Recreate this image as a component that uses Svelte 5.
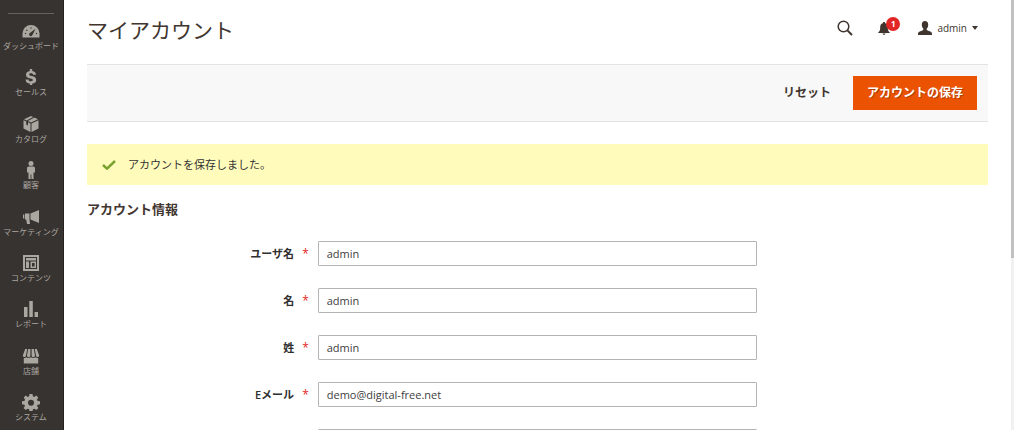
<script lang="ts">
  interface Field {
    id: string;
    label: string;
    value: string;
    type: string;
  }

  const menu = [
    { icon: 'dashboard', label: 'ダッシュボード' },
    { icon: 'sales', label: 'セールス' },
    { icon: 'catalog', label: 'カタログ' },
    { icon: 'customers', label: '顧客' },
    { icon: 'marketing', label: 'マーケティング' },
    { icon: 'content', label: 'コンテンツ' },
    { icon: 'reports', label: 'レポート' },
    { icon: 'stores', label: '店舗' },
    { icon: 'system', label: 'システム' }
  ];

  const initial: Field[] = [
    { id: 'username', label: 'ユーザ名', value: 'admin', type: 'text' },
    { id: 'firstname', label: '名', value: 'admin', type: 'text' },
    { id: 'lastname', label: '姓', value: 'admin', type: 'text' },
    { id: 'email', label: 'Eメール', value: 'demo@digital-free.net', type: 'email' },
    { id: 'password', label: '', value: '', type: 'password' }
  ];

  let fields = $state(initial.map((f) => ({ ...f })));
  let saved = $state(true);
  let notifications = 1;

  function reset() {
    fields = initial.map((f) => ({ ...f }));
    saved = false;
  }

  function save(e: Event) {
    e.preventDefault();
    saved = true;
  }
</script>

{#snippet menuIcon(name: string)}
  <svg class="menu-icon" viewBox="0 0 18 18" aria-hidden="true">
    {#if name === 'dashboard'}
      <path d="M.5 15.500v-4a8.500 8.500 0 0 1 17 0v4z" />
      <g class="cut">
        <circle cx="3.500" cy="11.500" r=".7" />
        <circle cx="4.800" cy="8.200" r=".7" />
        <circle cx="9" cy="6" r=".7" />
        <circle cx="14.500" cy="11.500" r=".7" />
        <path d="M13.600 6.800 10.400 13a1.700 1.700 0 1 1-2.500-2z" />
      </g>
    {:else if name === 'sales'}
      <path d="M7.800 1h2.400v2c2.300.3 3.700 1.600 3.800 3.700h-2.900C11 5.700 10.200 5.200 9 5.200s-1.800.5-1.800 1.200c0 .8.700 1.100 2.600 1.500 2.900.6 4.400 1.700 4.400 4 0 2.100-1.500 3.400-4 3.700V17H7.800v-1.400c-2.600-.3-4.100-1.800-4.200-4.200h2.900c.1 1.300.9 1.900 2.400 1.900 1.300 0 2-.5 2-1.200 0-.8-.6-1.200-2.500-1.600C5.500 9.900 4 8.900 4 6.700 4 4.700 5.400 3.300 7.800 3z" />
    {:else if name === 'catalog'}
      <path d="M9 1 11.200 2 4.600 5.400 2 4.200zM12.400 2.600 16 4.200 9 7.600 5.900 6.100zM1.500 5.200 4.200 6.500v3l1.800.9V7.300l2.500 1.200V17l-7-3.500zM16.500 5.200v8.300l-7 3.500V8.500z" />
    {:else if name === 'customers'}
      <circle cx="9" cy="2.600" r="2.500" />
      <path d="M6.800 5.500h4.400c1.100 0 1.800.7 1.800 1.800v4.200h-1.500V18H9.400v-4.500h-.8V18H6.500v-6.500H5V7.300c0-1.100.7-1.800 1.800-1.800z" />
    {:else if name === 'marketing'}
      <path d="M17 2v13L8.500 11.500V5.500zM7.500 5.500v6L8 16H5l-.8-4.500H3V5.500zM1 6.500h1.300v4H1z" />
    {:else if name === 'content'}
      <path fill-rule="evenodd" d="M1 1h16v16H1zM3 3v12h12V3zM4 4h10v2.500H4zM4 7.500h3V14H4zM8.500 7.500H14V14H8.500zM10 9v3.500h2.600V9z" />
    {:else if name === 'reports'}
      <path d="M2 7h3.500v10H2zM7.300 1h3.500v16H7.300zM12.600 12H16v5h-3.400z" />
    {:else if name === 'stores'}
      <path d="M3.200 2h2L4 8.500a1.600 1.600 0 0 1-3.200 0zM6.200 2h2.200v6.500a1.700 1.700 0 0 1-3.400 0zM9.600 2h2.200L13 8.500a1.700 1.700 0 0 1-3.400 0zM12.800 2h2l2.400 6.500a1.600 1.600 0 0 1-3.200 0zM1.800 11c1 .2 2 0 2.700-.7 1 .9 2.700.9 4.500 0 1.800.9 3.500.9 4.500 0 .7.700 1.700.9 2.700.7v5.500H1.800z" />
    {:else}
      <path fill-rule="evenodd" d="M7.500 1h3l.4 2.300 1.400.6 1.900-1.400 2.100 2.100-1.300 1.900.6 1.400 2.400.4v2.900l-2.400.5-.6 1.400 1.400 1.900-2.100 2.100-2-1.400-1.400.6-.4 2.200h-3l-.4-2.200-1.400-.6-2 1.400-2.100-2.100L3 13.100l-.6-1.400L0 11.200V8.300l2.400-.4L3 6.500 1.700 4.600l2.100-2.100 1.900 1.400 1.400-.6zM9 6.800a3 3 0 1 0 0 6 3 3 0 0 0 0-6z" />
    {/if}
  </svg>
{/snippet}

<div class="admin">
  <nav class="menu" aria-label="メニュー">
    <ul>
      {#each menu as item}
        <li>
          <a href="#{item.icon}">
            {@render menuIcon(item.icon)}
            <span>{item.label}</span>
          </a>
        </li>
      {/each}
    </ul>
  </nav>

  <form class="page" onsubmit={save}>
    <header class="page-header">
      <h1>マイアカウント</h1>
      <div class="tools">
        <button type="button" class="tool" aria-label="検索">
          <svg class="search-icon" viewBox="0 0 16 16" aria-hidden="true">
            <circle cx="6.500" cy="6.500" r="5.300" />
            <path d="m10.400 10.400 4.600 4.600" />
          </svg>
        </button>
        <button type="button" class="tool bell" aria-label="通知">
          <svg class="bell-icon" viewBox="0 0 12 14" aria-hidden="true">
            <path d="M6 1c.8 0 1.200.5 1.200 1.200C9 2.700 9.800 4 9.800 6c0 3 .4 4.300 2 5.500v.5H.2v-.5C1.800 10.300 2.200 9 2.200 6c0-2 .8-3.300 2.600-3.800C4.800 1.500 5.200 1 6 1zM4.500 12.500h3c-.2.9-.7 1.300-1.500 1.300s-1.300-.4-1.500-1.300z" />
          </svg>
          <span class="badge">{notifications}</span>
        </button>
        <button type="button" class="tool account">
          <svg class="user-icon" viewBox="0 0 14 14" aria-hidden="true">
            <path d="M7 0c2 0 3.200 1.300 3.200 3.400 0 1.900-.5 3.300-1.500 4.200v1.200c.4.8 1.600 1 3 1.500C13.300 10.900 14 11.500 14 13v1H0v-1c0-1.500.7-2.100 2.300-2.700 1.400-.5 2.600-.7 3-1.500V7.600C4.300 6.700 3.800 5.300 3.800 3.400 3.800 1.300 5 0 7 0z" />
          </svg>
          <span>admin</span>
          <svg class="caret" viewBox="0 0 6 4" aria-hidden="true"><path d="M0 0h6L3 4z" /></svg>
        </button>
      </div>
    </header>

    <div class="actions">
      <button type="button" class="reset" onclick={reset}>リセット</button>
      <button type="submit" class="save">アカウントの保存</button>
    </div>

    {#if saved}
      <div class="message" role="status">
        <svg class="check" viewBox="0 0 14 10" aria-hidden="true">
          <path d="m1 5 4 3.600L13 1" />
        </svg>
        アカウントを保存しました。
      </div>
    {/if}

    <fieldset>
      <legend>アカウント情報</legend>
      {#each fields as field (field.id)}
        <div class="field">
          {#if field.label}
            <label for={field.id}>{field.label}<span class="required">*</span></label>
          {/if}
          <input
            id={field.id}
            type={field.type}
            aria-label={field.label ? undefined : 'パスワード'}
            bind:value={field.value}
          />
        </div>
      {/each}
    </fieldset>
  </form>

  <div class="scrollbar"><div class="thumb"></div></div>
</div>

<style>
  :global(body) {
    background: #fff;
    color: #41362f;
    font-family: 'Open Sans', 'Noto Sans CJK JP', sans-serif;
    font-size: 11px;
  }

  .admin {
    display: grid;
    grid-template-columns: 64px 1fr 3px;
    height: 100vh;
    overflow: hidden;
  }

  button {
    border: 0;
    padding: 0;
    background: none;
    color: inherit;
    font: inherit;
    cursor: pointer;
  }

  /* side menu */
  .menu {
    display: flex;
    flex-direction: column;
    box-sizing: border-box;
    height: 100vh;
    padding: 13px 1px 7px 0;
    background: #373330;
    border-right: 1px solid #24211f;
  }

  .menu::before {
    content: '';
    height: 1px;
    margin: 0 8px;
    background: #68625c;
  }

  .menu ul {
    flex: 1;
    display: flex;
    flex-direction: column;
    justify-content: space-between;
    margin: 0;
    padding: 8px 0 0;
    list-style: none;
  }

  .menu a {
    display: flex;
    flex-direction: column;
    align-items: center;
    color: #aaa6a0;
    font-size: 8px;
    line-height: 12px;
    text-decoration: none;
    white-space: nowrap;
  }

  .menu-icon {
    width: 18px;
    height: 18px;
    fill: #aaa6a0;
  }

  .cut {
    fill: #373330;
  }

  /* page */
  .page {
    height: 100vh;
    overflow: hidden;
    padding: 0 23px;
    box-sizing: border-box;
  }

  .page-header {
    display: flex;
    align-items: center;
    justify-content: space-between;
    height: 56px;
    padding-bottom: 8px;
  }

  h1 {
    margin: 0;
    padding-top: 4px;
    font-size: 21px;
    font-weight: 400;
    line-height: 28px;
  }

  .tools {
    display: flex;
    align-items: center;
    gap: 25px;
    padding-right: 10px;
  }

  .tool {
    display: flex;
    align-items: center;
    color: #41362f;
  }

  .search-icon {
    width: 16px;
    height: 16px;
    fill: none;
    stroke: #41362f;
    stroke-width: 1.500;
  }

  .search-icon path {
    stroke-width: 2;
  }

  .bell {
    position: relative;
    margin-right: 3px;
  }

  .bell-icon {
    width: 12px;
    height: 14px;
    fill: #41362f;
  }

  .badge {
    position: absolute;
    top: -4px;
    left: 8px;
    width: 14px;
    border-radius: 7px;
    background: #e22626;
    color: #fff;
    font-size: 8px;
    font-weight: 700;
    line-height: 14px;
    text-align: center;
  }

  .account {
    gap: 5px;
    font-size: 10px;
    line-height: 14px;
  }

  .user-icon {
    width: 14px;
    height: 14px;
    fill: #41362f;
  }

  .caret {
    width: 6px;
    height: 4px;
    fill: #41362f;
  }

  .actions {
    display: flex;
    align-items: center;
    justify-content: flex-end;
    gap: 22px;
    padding: 11px;
    background: #f8f8f8;
    border-top: 1px solid #e3e3e3;
    border-bottom: 1px solid #e3e3e3;
    font-size: 12px;
    font-weight: 700;
    line-height: 18px;
  }

  .save {
    padding: 8px 14px;
    background: #eb5202;
    color: #fff;
    text-shadow: 1px 1px 0 rgba(0, 0, 0, 0.25);
  }

  .message {
    display: flex;
    align-items: center;
    gap: 12px;
    margin-top: 22px;
    padding: 12px 15px;
    background: #fffbbb;
    color: #333;
    line-height: 17px;
  }

  .check {
    width: 14px;
    height: 10px;
    fill: none;
    stroke: #79a22e;
    stroke-width: 2.500;
  }

  fieldset {
    display: grid;
    gap: 22px;
    min-width: 0;
    margin: 14px 0 0;
    padding: 0;
    border: 0;
  }

  legend {
    margin-bottom: 22px;
    padding: 0;
    font-size: 13px;
    font-weight: 700;
    line-height: 20px;
  }

  .field {
    display: grid;
    grid-template-columns: 21fr 40fr 21fr;
    align-items: center;
  }

  label {
    padding-right: 9px;
    color: #303030;
    font-weight: 600;
    line-height: 16px;
    text-align: right;
  }

  .required {
    margin-left: 8px;
    color: #e22626;
    font-size: 12px;
    font-weight: 400;
  }

  input {
    grid-column: 2;
    box-sizing: border-box;
    width: 100%;
    min-width: 0;
    height: 25px;
    padding: 0 8px 1px;
    border: 1px solid #b4b4b4;
    border-radius: 1px;
    background: #fff;
    color: #404040;
    font: inherit;
  }

  .scrollbar {
    background: #f1f1f1;
  }

  .thumb {
    height: 60%;
    background: #c1c1c1;
  }
</style>
